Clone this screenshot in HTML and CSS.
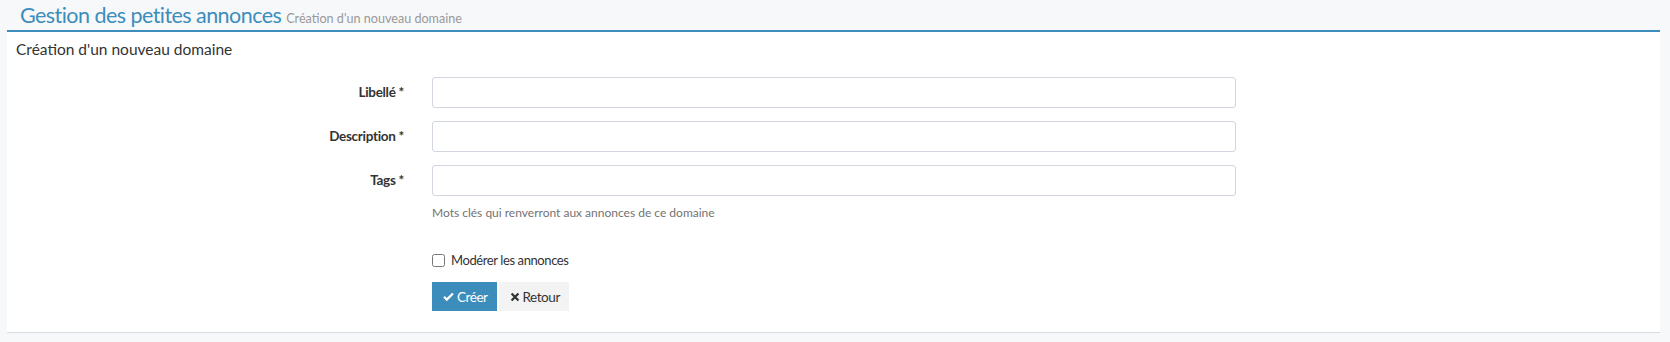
FILE: index.html
```html
<!DOCTYPE html>
<html lang="fr">
  <head>
    <meta charset="UTF-8" />
    <title>Gestion des petites annonces</title>
    <link rel="stylesheet" href="styles.css">
  </head>
  <body>
    <!-- en-tête de page -->
    <section class="content-header">
      <h1>Gestion des petites annonces <small>Création d'un nouveau domaine</small></h1>
    </section>

    <!-- formulaire -->
    <div class="box">
      <div class="box-header">Création d'un nouveau domaine</div>
      <form class="form">
        <label class="label" for="libelle">Libellé *</label>
        <input class="input" id="libelle" type="text" />

        <label class="label" for="description">Description *</label>
        <input class="input" id="description" type="text" />

        <label class="label" for="tags">Tags *</label>
        <div class="field">
          <input class="input" id="tags" type="text" />
          <p class="help">Mots clés qui renverront aux annonces de ce domaine</p>
        </div>

        <div class="spacer"></div>
        <div class="field">
          <label class="check">
            <input type="checkbox" />
            <span>Modérer les annonces</span>
          </label>
          <div class="actions">
            <button type="button" class="btn btn-primary">
              <svg class="ico" viewBox="0 0 16 16" width="11" height="11"><path d="M1.5 8.5 L5.5 12.5 L14.5 3.5" fill="none" stroke="#fff" stroke-width="3.2" stroke-linejoin="miter"/></svg>Créer
            </button>
            <button type="button" class="btn btn-default">
              <svg class="ico" viewBox="0 0 16 16" width="10" height="10"><path d="M2.5 2.5 L13.5 13.5 M13.5 2.5 L2.5 13.5" fill="none" stroke="#333" stroke-width="3.6"/></svg>Retour
            </button>
          </div>
        </div>
      </form>
    </div>
  </body>
</html>
```

FILE: styles.css
```css
* {
  margin: 0;
  padding: 0;
  box-sizing: border-box;
}

body {
  background-color: #f7f8fa;
  font-family: Lato, "Open Sans", sans-serif;
  color: #333;
  font-size: 13.5px;
  letter-spacing: -0.45px;
}

/* en-tête */
.content-header {
  height: 30px;
  padding-left: 20px;
}
.content-header h1 {
  font-weight: normal;
  font-size: 21.5px;
  line-height: 30px;
  letter-spacing: -0.55px;
  color: #3c8dbc;
}
.content-header small {
  font-size: 12.6px;
  letter-spacing: 0;
  color: #999;
}

/* boîte */
.box {
  margin: 0 10px 0 7px;
  background-color: #fff;
  border-top: 2px solid #3c8dbc;
  border-bottom: 1px solid #d8dbe2;
  padding-bottom: 21px;
}
.box-header {
  padding: 7px 9px;
  font-size: 15.5px;
  line-height: 20px;
  letter-spacing: 0;
}

/* formulaire */
.form {
  display: grid;
  grid-template-columns: 397px 804px;
  column-gap: 28px;
  row-gap: 13px;
  padding-top: 11px;
  align-items: start;
}
.label {
  text-align: right;
  font-weight: bold;
  line-height: 31px;
  letter-spacing: -0.3px;
}
.input {
  display: block;
  width: 804px;
  height: 31px;
  border: 1px solid #d2d6de;
  border-radius: 3px;
  padding: 0 10px;
  font: inherit;
}
.help {
  margin-top: 9px;
  font-size: 12px;
  line-height: 16px;
  letter-spacing: 0;
  color: #737373;
}
.check {
  display: flex;
  align-items: center;
  gap: 6px;
  margin-top: 17px;
  line-height: 18px;
  font-size: 13px;
  letter-spacing: -0.4px;
}
.check input {
  width: 13px;
  height: 13px;
  margin: 0;
}
.actions {
  display: flex;
  gap: 2px;
  margin-top: 13px;
}
.btn {
  display: flex;
  align-items: center;
  gap: 3px;
  height: 29px;
  border: 0;
  font: inherit;
  letter-spacing: inherit;
  padding: 0 9px 0 11px;
}
.btn-primary {
  background-color: #3c8dbc;
  color: #fff;
}
.btn-default {
  background-color: #f3f3f3;
  color: #333;
}
```
